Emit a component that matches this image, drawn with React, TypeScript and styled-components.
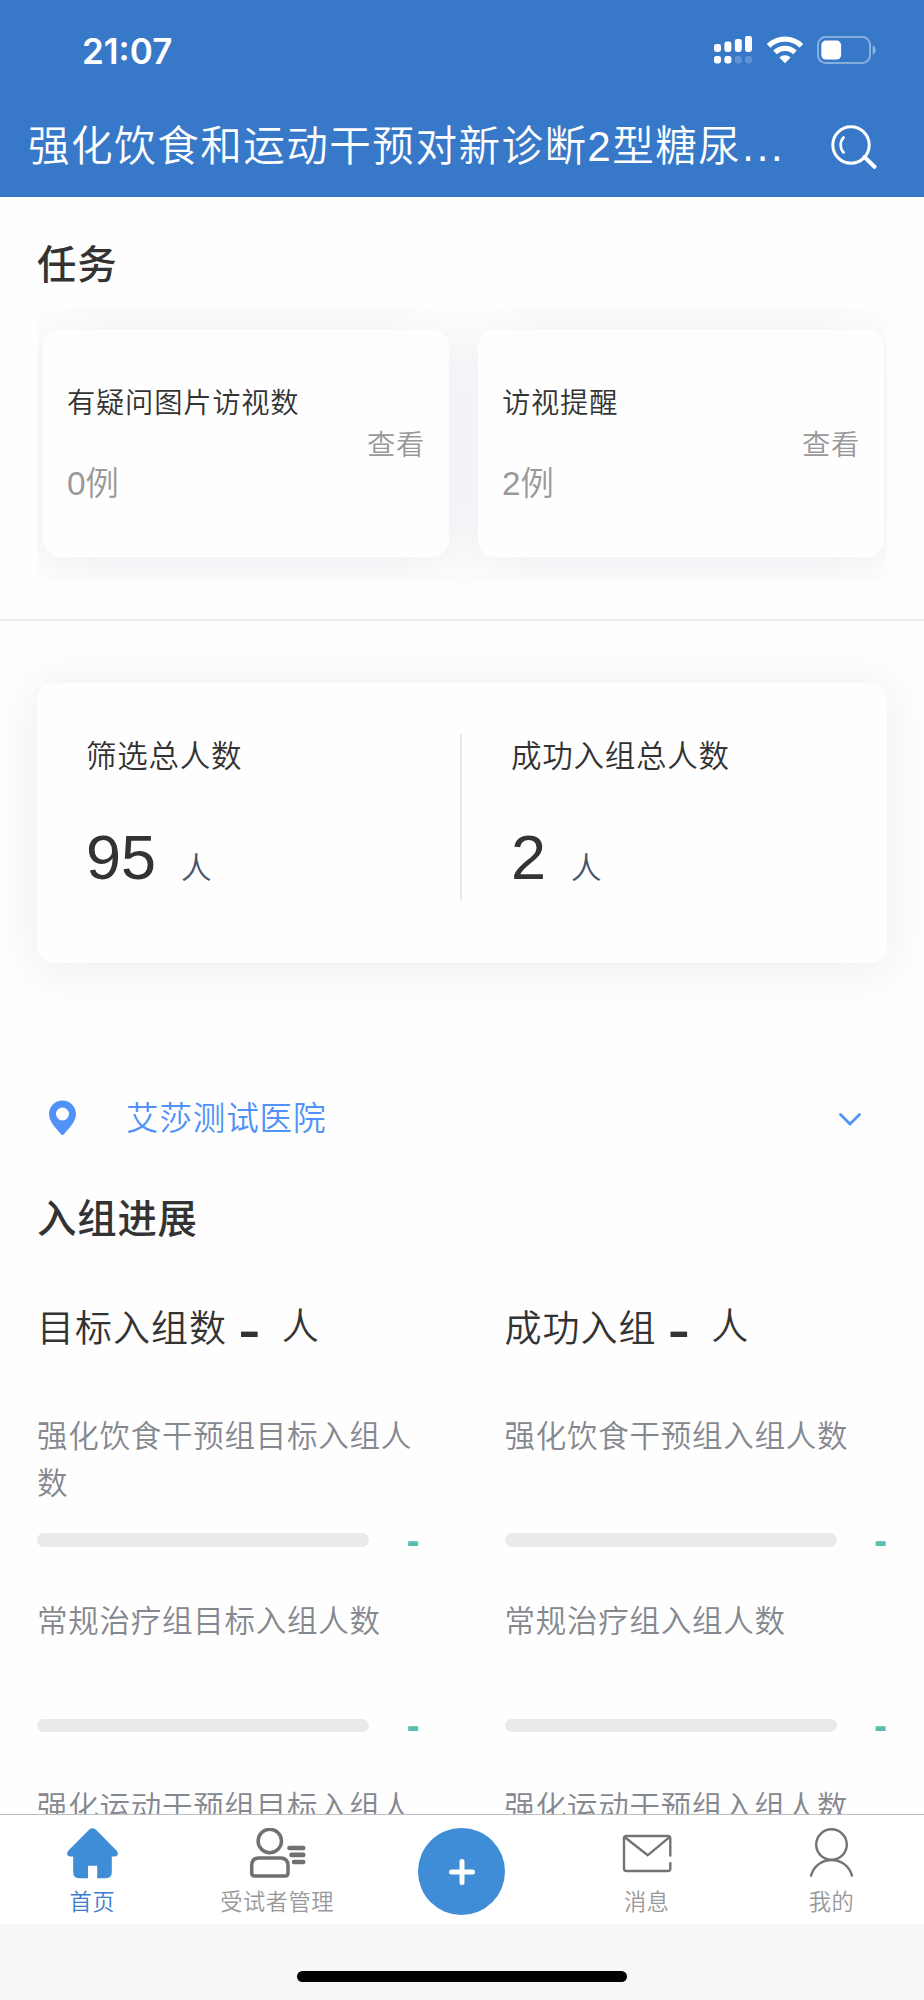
import React from "react";
import styled, { createGlobalStyle } from "styled-components";

const GlobalStyle = createGlobalStyle`
  * { box-sizing: border-box; }
  body {
    margin: 0;
    background: #fefefe;
    font-family: "Liberation Sans", "Noto Sans CJK SC", sans-serif;
    color: #333;
  }
`;

const Page = styled.div`
  display: flex;
  flex-direction: column;
  width: 924px;
  height: 2000px;
  overflow: hidden;
  background: #fefefe;
  font-weight: 350;
`;

const Header = styled.header`
  flex: none;
  height: 197px;
  background: #3878c8;
  color: #fff;
`;

const StatusBar = styled.div`
  display: flex;
  align-items: center;
  justify-content: space-between;
  height: 100px;
  padding: 0 47px 0 82px;
`;

const Clock = styled.span`
  padding-top: 2px;
  font-family: Inter, sans-serif;
  font-size: 35px;
  font-weight: 600;
  line-height: 40px;
`;

const StatusIcons = styled.div`
  display: flex;
  align-items: center;
`;

const TitleBar = styled.div`
  display: flex;
  align-items: center;
  justify-content: space-between;
  height: 94px;
  padding: 0 47px 0 28px;
`;

const Title = styled.h1`
  margin: 0;
  font-size: 41.6px;
  font-weight: 350;
  line-height: 60px;
  letter-spacing: 1.45px;
  white-space: nowrap;
`;

const Ellipsis = styled.span`
  margin-left: 1px;
  letter-spacing: 2.8px;
`;

const Main = styled.main`
  flex: 1;
  min-height: 0;
  overflow: hidden;
  padding-top: 38px;
`;

const SectionTitle = styled.h2<{ $top?: number }>`
  margin: ${(p) => p.$top ?? 0}px 0 0 37px;
  font-size: 39.4px;
  font-weight: 500;
  line-height: 60px;
  letter-spacing: 0.8px;
`;

const TaskStrip = styled.section`
  display: flex;
  gap: 29px;
  margin: 11px 37px 0;
  padding: 24px 3px 25px 6px;
  overflow: hidden;
`;

const TaskCard = styled.article`
  display: flex;
  flex: 1;
  align-items: center;
  justify-content: space-between;
  height: 227px;
  padding: 0 24px;
  border-radius: 17px;
  background: #fefefe;
  box-shadow: 0 5px 49px rgba(90, 115, 150, 0.13);
`;

const TaskInfo = styled.div`
  display: flex;
  flex-direction: column;
  gap: 41px;
`;

const TaskName = styled.span`
  font-size: 28.3px;
  line-height: 40px;
  letter-spacing: 0.75px;
`;

const TaskCount = styled.span`
  font-size: 33.4px;
  line-height: 40px;
  color: #999;
`;

const TaskLink = styled.a`
  padding-top: 3px;
  font-size: 28.3px;
  line-height: 40px;
  letter-spacing: 0.7px;
  color: #999;
`;

const Divider = styled.hr`
  height: 2px;
  margin: 37px 0 0;
  border: 0;
  background: #ebebec;
`;

const StatsCard = styled.section`
  display: flex;
  height: 280px;
  margin: 62px 37px 0;
  padding: 51px 0 62px;
  border-radius: 17px;
  background: #fefefe;
  box-shadow: 0 5px 49px rgba(90, 115, 150, 0.13);
`;

const Stat = styled.div`
  flex: 1;
  padding: 0 0 0 49px;

  & + & {
    margin-left: -2px;
    border-left: 2px solid #e9e9ea;
  }
`;

const StatLabel = styled.div`
  font-size: 30.5px;
  line-height: 44px;
  letter-spacing: 0.75px;
`;

const StatValue = styled.div`
  display: flex;
  align-items: baseline;
  gap: 25px;
  margin-top: 41px;
  font-size: 63px;
  line-height: 76px;
`;

const StatUnit = styled.span`
  font-size: 30.5px;
  line-height: 44px;
  color: #4a536c;
`;

const HospitalPicker = styled.div`
  display: flex;
  align-items: center;
  height: 60px;
  margin-top: 125px;
  padding: 0 62px 0 48px;
  color: #5192f8;
`;

const HospitalName = styled.span`
  flex: 1;
  margin-left: 49px;
  padding-top: 2px;
  font-size: 32.6px;
  line-height: 58px;
  letter-spacing: 0.8px;
`;

const PickerArrow = styled.span`
  display: flex;
  padding-top: 3px;
`;

const Progress = styled.section`
  display: grid;
  grid-template-columns: 1fr 1fr;
  column-gap: 85px;
  margin: 50px 37px 0;
`;

const ProgressTotal = styled.div`
  display: flex;
  align-items: center;
  height: 60px;
  margin-bottom: 54px;
  font-size: 37px;
  line-height: 56px;
  letter-spacing: 1px;
`;

const TotalName = styled.span`
  padding-top: 2px;
`;

const TotalValue = styled.span`
  margin: 0 21px 0 11px;
  font-size: 68px;
  font-weight: 400;
  line-height: 56px;
  letter-spacing: 0;
`;

const TotalUnit = styled.span`
  padding-bottom: 2px;
`;

const Group = styled.div`
  height: 185.3px;
`;

const GroupLabel = styled.div`
  height: 94px;
  font-size: 30.5px;
  line-height: 46.5px;
  letter-spacing: 0.75px;
  color: #85888f;
`;

const BarRow = styled.div`
  display: flex;
  align-items: center;
  justify-content: space-between;
  height: 14px;
  margin-top: 26px;
`;

const Bar = styled.div`
  width: 332px;
  height: 13.5px;
  border-radius: 7px;
  background: #eaeaea;
`;

const BarValue = styled.b`
  padding-top: 2px;
  font-size: 39px;
  line-height: 14px;
  color: #56bfb0;
`;

const TabBar = styled.nav`
  flex: none;
  display: grid;
  grid-template-columns: repeat(5, 1fr);
  height: 110px;
  border-top: 1px solid #bfbfc1;
  background: #fff;
`;

const Tab = styled.a<{ $active?: boolean }>`
  display: flex;
  flex-direction: column;
  align-items: center;
  padding-top: 13px;
  font-size: 22.2px;
  letter-spacing: 0.6px;
  line-height: 32px;
  color: ${(p) => (p.$active ? "#3a7dd0" : "#98989a")};

  svg {
    margin-bottom: 8px;
  }
`;

const AddButton = styled.button`
  display: flex;
  align-items: center;
  justify-content: center;
  justify-self: center;
  width: 87px;
  height: 87px;
  margin-top: 13px;
  padding: 0;
  border: 0;
  border-radius: 50%;
  background: #3f8dd6;
`;

const HomeArea = styled.footer`
  flex: none;
  display: flex;
  justify-content: center;
  height: 76px;
  padding-top: 47px;
  background: #f7f7f7;
`;

const HomeIndicator = styled.div`
  width: 330px;
  height: 11px;
  border-radius: 6px;
  background: #000;
`;

const SignalIcon = () => (
  <svg width="38" height="28" viewBox="0 0 38 28" fill="#fff">
    <rect x="0" y="8" width="7" height="8" rx="2.4" />
    <rect x="10.4" y="5.6" width="7" height="10.4" rx="2.4" />
    <rect x="20.8" y="3" width="7" height="13" rx="2.4" />
    <rect x="31" y="0" width="7" height="16" rx="2.4" />
    <rect x="0" y="20" width="7" height="7.4" rx="2.4" />
    <rect x="10.4" y="20" width="7" height="7.4" rx="2.4" />
    <rect x="20.8" y="20" width="7" height="7.4" rx="2.4" opacity="0.2" />
    <rect x="31" y="20" width="7" height="7.4" rx="2.4" opacity="0.2" />
  </svg>
);

const WifiSvg = styled.svg`
  margin: 0 13px 0 14px;
`;

const WifiIcon = () => (
  <WifiSvg width="38" height="28" viewBox="0 0 38 28">
    <g fill="none" stroke="#fff" strokeWidth="5.2">
      <path d="M2.6 9.9a23.3 23.3 0 0 1 32.8 0" />
      <path d="M9 16.4a14.3 14.3 0 0 1 20 0" />
    </g>
    <path d="M13.4 21.6a8 8 0 0 1 11.2 0L19 27.3z" fill="#fff" />
  </WifiSvg>
);

const BatteryIcon = () => (
  <svg width="60" height="28" viewBox="0 0 60 28">
    <rect x="1" y="1" width="52" height="26" rx="7.5" fill="none" stroke="#fff" strokeOpacity="0.4" strokeWidth="2" />
    <rect x="4.3" y="4.6" width="19.8" height="19" rx="4.5" fill="#fff" />
    <path d="M55.6 9.6c4 1.4 4 7.6 0 9z" fill="#fff" fillOpacity="0.45" />
  </svg>
);

const SearchIcon = () => (
  <svg width="46" height="44" viewBox="0 0 46 44" fill="none" stroke="#fff" strokeLinecap="round">
    <circle cx="20" cy="20" r="18.2" strokeWidth="3" />
    <path d="M12.6 12.5a11 11 0 0 0 0 15" strokeWidth="2.6" />
    <path d="M33.5 32l10 9.8" strokeWidth="4" />
  </svg>
);

const PinIcon = () => (
  <svg width="29" height="36" viewBox="0 0 29 36">
    <path
      fillRule="evenodd"
      fill="#5192f8"
      d="M14.5 0.5C7 0.5 1 6.5 1 14c0 8 7.5 14.5 12 20.3q1.5 1.6 3 0C20.5 28.5 28 22 28 14 28 6.5 22 0.5 14.5 0.5zM14.5 7.5a6.5 6.5 0 1 1 0 13 6.5 6.5 0 0 1 0-13z"
    />
  </svg>
);

const ChevronIcon = () => (
  <svg width="24" height="15" viewBox="0 0 24 15" fill="none" stroke="#5192f8" strokeWidth="2.8" strokeLinecap="round">
    <path d="M2.5 2.5L12 12l9.5-9.5" />
  </svg>
);

const HomeIcon = () => (
  <svg width="51" height="51" viewBox="0 0 51 51" fill="#3f8dd6">
    <path d="M22.3 1.5Q25.5-1.2 28.7 1.5L49.5 22.5C52 25 51 28.6 47.5 28.6H44.8V44q0 6.2-6 6.2H30.2V37.8H21V50.2H12.2q-6 0-6-6.2V28.6H3.5C0 28.6-1 25 1.5 22.5z" />
  </svg>
);

const SubjectsIcon = () => (
  <svg width="58" height="51" viewBox="0 0 58 51" fill="none" stroke="#707070" strokeWidth="3.5">
    <circle cx="21.8" cy="13" r="11.7" />
    <path d="M11 30H32.5Q40 30 40 37.8V45Q40 48 37 48H6.5Q3.7 48 3.7 45V37.8Q3.7 30 11 30z" />
    <path d="M41.5 20H55.2M43.5 26.9H55.2M46 34H55.2" strokeWidth="4.6" strokeLinecap="round" />
  </svg>
);

const MailIcon = () => (
  <svg width="51" height="51" viewBox="0 0 51 51" fill="none" stroke="#737373" strokeWidth="2.4">
    <path d="M49.3 28.5V10.5Q49.3 8 46.8 8H5.5Q3 8 3 10.5V40.5Q3 43 5.5 43H46.8Q49.3 43 49.3 40.5V34.2" />
    <path d="M3.8 9.2L26.7 27.3L48.5 9.2" />
  </svg>
);

const ProfileIcon = () => (
  <svg width="51" height="51" viewBox="0 0 51 51" fill="none" stroke="#737373" strokeWidth="2.4">
    <circle cx="25.5" cy="16.6" r="15.3" />
    <path d="M4.8 48.5C10 26.5 41 26.5 46.2 48.5" />
  </svg>
);

const PlusIcon = () => (
  <svg width="26" height="26" viewBox="0 0 26 26" stroke="#fff" strokeWidth="5" strokeLinecap="round">
    <path d="M2.5 13H23.5M13 2.5V23.5" />
  </svg>
);

const tasks = [
  { name: "有疑问图片访视数", count: "0例" },
  { name: "访视提醒", count: "2例" },
];

const stats = [
  { label: "筛选总人数", value: 95 },
  { label: "成功入组总人数", value: 2 },
];

const progress = [
  {
    title: "目标入组数",
    groups: ["强化饮食干预组目标入组人数", "常规治疗组目标入组人数", "强化运动干预组目标入组人数"],
  },
  {
    title: "成功入组",
    groups: ["强化饮食干预组入组人数", "常规治疗组入组人数", "强化运动干预组入组人数"],
  },
];

export default function App() {
  return (
    <Page lang="zh-CN">
      <GlobalStyle />
      <Header>
        <StatusBar>
          <Clock>21:07</Clock>
          <StatusIcons>
            <SignalIcon />
            <WifiIcon />
            <BatteryIcon />
          </StatusIcons>
        </StatusBar>
        <TitleBar>
          <Title>
            强化饮食和运动干预对新诊断2型糖尿<Ellipsis>...</Ellipsis>
          </Title>
          <SearchIcon />
        </TitleBar>
      </Header>

      <Main>
        <SectionTitle>任务</SectionTitle>
        <TaskStrip>
          {tasks.map((task) => (
            <TaskCard key={task.name}>
              <TaskInfo>
                <TaskName>{task.name}</TaskName>
                <TaskCount>{task.count}</TaskCount>
              </TaskInfo>
              <TaskLink>查看</TaskLink>
            </TaskCard>
          ))}
        </TaskStrip>
        <Divider />

        <StatsCard>
          {stats.map((stat) => (
            <Stat key={stat.label}>
              <StatLabel>{stat.label}</StatLabel>
              <StatValue>
                {stat.value}
                <StatUnit>人</StatUnit>
              </StatValue>
            </Stat>
          ))}
        </StatsCard>

        <HospitalPicker>
          <PinIcon />
          <HospitalName>艾莎测试医院</HospitalName>
          <PickerArrow>
            <ChevronIcon />
          </PickerArrow>
        </HospitalPicker>

        <SectionTitle $top={41}>入组进展</SectionTitle>
        <Progress>
          {progress.map((column) => (
            <div key={column.title}>
              <ProgressTotal>
                <TotalName>{column.title}</TotalName>
                <TotalValue>-</TotalValue>
                <TotalUnit>人</TotalUnit>
              </ProgressTotal>
              {column.groups.map((label) => (
                <Group key={label}>
                  <GroupLabel>{label}</GroupLabel>
                  <BarRow>
                    <Bar />
                    <BarValue>-</BarValue>
                  </BarRow>
                </Group>
              ))}
            </div>
          ))}
        </Progress>
      </Main>

      <TabBar>
        <Tab $active>
          <HomeIcon />
          首页
        </Tab>
        <Tab>
          <SubjectsIcon />
          受试者管理
        </Tab>
        <AddButton aria-label="新增">
          <PlusIcon />
        </AddButton>
        <Tab>
          <MailIcon />
          消息
        </Tab>
        <Tab>
          <ProfileIcon />
          我的
        </Tab>
      </TabBar>
      <HomeArea>
        <HomeIndicator />
      </HomeArea>
    </Page>
  );
}
